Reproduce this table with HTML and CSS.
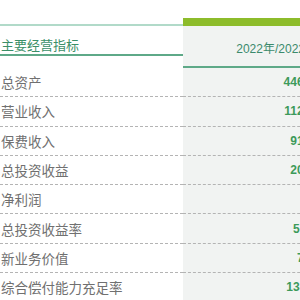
FILE: index.html
```html
<!DOCTYPE html>
<html lang="zh-CN">
<head>
    <meta charset="utf-8">
    <title>主要经营指标</title>
    <link rel="stylesheet" href="styles.css">
</head>
<body>
    <div class="kpi-table">
        <div class="kpi-head">
            <div class="cell label-cell">主要经营指标</div>
            <div class="cell value-cell">2022年/2022年末</div>
        </div>
        <div class="kpi-row">
            <div class="cell label-cell">总资产</div>
            <div class="cell value-cell">4460.58</div>
        </div>
        <div class="kpi-row">
            <div class="cell label-cell">营业收入</div>
            <div class="cell value-cell">1128.47</div>
        </div>
        <div class="kpi-row">
            <div class="cell label-cell">保费收入</div>
            <div class="cell value-cell">917.35</div>
        </div>
        <div class="kpi-row">
            <div class="cell label-cell">总投资收益</div>
            <div class="cell value-cell">208.64</div>
        </div>
        <div class="kpi-row">
            <div class="cell label-cell">净利润</div>
            <div class="cell value-cell">73.9</div>
        </div>
        <div class="kpi-row">
            <div class="cell label-cell">总投资收益率</div>
            <div class="cell value-cell">5.12%</div>
        </div>
        <div class="kpi-row">
            <div class="cell label-cell">新业务价值</div>
            <div class="cell value-cell">76.85</div>
        </div>
        <div class="kpi-row last">
            <div class="cell label-cell">综合偿付能力充足率</div>
            <div class="cell value-cell">138.6%</div>
        </div>
    </div>
</body>
</html>
```

FILE: styles.css
```css
body {
    margin: 0;
    overflow: hidden;
    background-color: #fff;
    font-family: "Liberation Sans", "Noto Sans CJK SC", sans-serif;
}
.kpi-table {
    width: 330px;
    margin-top: 18px;
}
.kpi-head,
.kpi-row {
    display: grid;
    grid-template-columns: 183px 1fr;
}
.cell {
    display: flex;
    align-items: center;
}
.label-cell {
    padding-left: 1px;
}
.value-cell {
    justify-content: flex-end;
    padding-right: 3px;
    background-color: #f1f3f2;
}

/* header */
.kpi-head .cell {
    height: 38px;
    border-bottom: 2px solid #5ea988;
}
.kpi-head .label-cell {
    margin-top: 6px;
    height: 32px;
    padding-top: 8px;
    box-sizing: border-box;
    border-top: 2px solid #b1dac9;
    color: #3b8f68;
    font-size: 13px;
}
.kpi-head .value-cell {
    padding-top: 2px;
    padding-right: 1px;
    border-top: 8px solid #8dbc2b;
    color: #3b8a6c;
    font-size: 12px;
}

/* rows */
.kpi-row .cell {
    height: 28.3px;
    border-bottom: 1px dashed #b4b4b4;
}
.kpi-row .label-cell {
    color: #707070;
    font-size: 13.5px;
}
.kpi-row .value-cell {
    color: #3d9a5a;
    font-size: 12px;
    font-weight: bold;
}
.kpi-row.last .cell {
    border-bottom: 2px solid #7cc3a2;
}
```
